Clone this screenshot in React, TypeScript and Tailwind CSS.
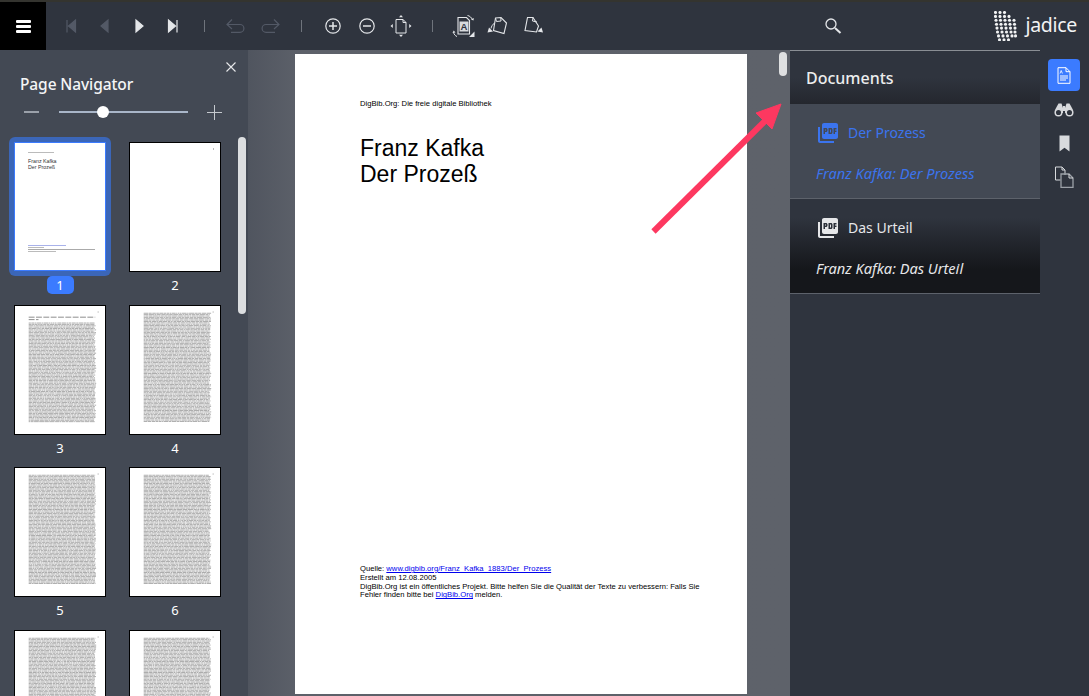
import React from 'react';
import { MdPictureAsPdf } from 'react-icons/md';

function Sep() {
  return (
    <div className="w-[28px] flex justify-center">
      <div className="w-px h-[12px] bg-[#6f747c]" />
    </div>
  );
}

function ToolIcon({ children, className = 'text-[#e4e6e9]' }: { children: React.ReactNode; className?: string }) {
  return (
    <div className={`w-[34px] h-[34px] flex items-center justify-center ${className}`}>
      <svg width="24" height="24" viewBox="0 0 24 24" fill="none" stroke="currentColor" strokeWidth="1.2">
        {children}
      </svg>
    </div>
  );
}

function JadiceLogo() {
  const rows = [
    [1.5, 6, 10.5],
    [1.5, 6, 10.5, 15],
    [2, 6.5, 11, 15.5, 20],
    [2.5, 7, 11.5, 16, 20.5],
    [3, 7.5, 12, 16.5, 21],
    [3.5, 8, 12.5, 17, 21],
    [4.5, 9, 13.5, 18, 21.5],
    [5.5, 10, 14.5],
  ];
  return (
    <div className="flex items-center gap-[8px]">
      <svg width="23" height="30" viewBox="0 0 23 30">
        {rows.map((r, y) =>
          r.map((x) => <circle key={`${x}-${y}`} cx={x} cy={1.5 + y * 3.9} r={1.55} fill="#f2f3f4" />)
        )}
      </svg>
      <span className="text-[19.500px] leading-none tracking-[-0.3px] text-[#f2f3f4] mt-[-3px]">jadice</span>
    </div>
  );
}

function Toolbar() {
  return (
    <div className="h-[50px] shrink-0 flex items-center bg-[#2f343e] border-t-2 border-[#34342f]">
      <div className="w-[46px] h-full bg-black flex flex-col items-center justify-center gap-[2px]">
        <div className="w-[15px] h-[3px] rounded-[1px] bg-white" />
        <div className="w-[15px] h-[3px] rounded-[1px] bg-white" />
        <div className="w-[15px] h-[3px] rounded-[1px] bg-white" />
      </div>
      <div className="w-[8px]" />
      <ToolIcon className="text-[#535966]">
        <path d="M8 6v12.500M16.500 6v12l-7-6z" fill="currentColor" />
      </ToolIcon>
      <ToolIcon className="text-[#535966]">
        <path d="M15 6v12l-7-6z" fill="currentColor" />
      </ToolIcon>
      <ToolIcon>
        <path d="M9 6v12l7-6z" fill="currentColor" />
      </ToolIcon>
      <ToolIcon>
        <path d="M7.500 6v12l7-6zM16 6v12.500" fill="currentColor" />
      </ToolIcon>
      <Sep />
      <div className="w-px" />
      <ToolIcon className="text-[#535966]">
        <path d="M8 5.500 3 10.500 8 15M3.500 10.500h12.500a3.800 3.800 0 0 1 0 7.800H7" />
      </ToolIcon>
      <ToolIcon className="text-[#535966]">
        <path d="M16 5.500l5 5-5 4.500M20.500 10.500H8a3.800 3.800 0 0 0 0 7.800h9" />
      </ToolIcon>
      <Sep />
      <div className="w-px" />
      <ToolIcon>
        <circle cx="12" cy="12" r="7.200" />
        <path d="M8 12h8M12 8v8" strokeWidth="1.500" />
      </ToolIcon>
      <ToolIcon>
        <circle cx="12" cy="12" r="7.200" />
        <path d="M8 12h8" strokeWidth="1.500" />
      </ToolIcon>
      <ToolIcon>
        <path d="M7 5.500h7l3 3v10.500H7z" strokeWidth="1" />
        <path d="M14 5.500v3h3" strokeWidth="1" />
        <path d="M12 1l2 2.300h-4zM12 23l2-2.300h-4zM1.500 12l2.300-2v4zM22.500 12l-2.300-2v4z" fill="currentColor" stroke="none" />
      </ToolIcon>
      <Sep />
      <div className="w-px" />
      <ToolIcon>
        <path d="M6 3.500h8.500l3 3v13.500H6z" strokeWidth="1.100" />
        <rect x="7.500" y="7.500" width="9" height="10" fill="#d8dadd" stroke="none" />
        <text x="12" y="16" textAnchor="middle" fontSize="9.500" fontWeight="700" fill="#2f3540" stroke="none" fontFamily="'Liberation Sans', sans-serif">A</text>
        <path d="M15.500 1.500c2.200.4 4 2 4.800 4M1.500 18.500c.5 1.800 1.800 3.400 3.500 4" strokeWidth="1" />
        <path d="M22.500 23h-5.500l5.500-5.500zM21.500 6.500l-2.500-1 2.800-1.500zM.5 19l3-.5-1.800-2z" fill="currentColor" stroke="none" />
      </ToolIcon>
      <ToolIcon>
        <path d="M9.500 4l5.500-.5 5.500 5.500-2.500 10.500-10.500-3z" strokeWidth="1.100" />
        <path d="M9.500 4l1 3.500 4.500-.5-.2-3.500" strokeWidth="1" />
        <path d="M1.500 18.500l1.500-5 4 4z" fill="currentColor" stroke="none" />
        <path d="M5 14.500c.3-2 1.500-4 3.500-5.500" strokeWidth="1" />
      </ToolIcon>
      <ToolIcon>
        <path d="M8.500 3.500h5.500l5.500 8.500-2 6-11.500-1.500z" transform="translate(-1 0)" strokeWidth="1.100" />
        <path d="M13 3.500l-.5 3.500 4.500 1" strokeWidth="1" />
        <path d="M23 18.500l-1.500-5-4 4z" fill="currentColor" stroke="none" />
      </ToolIcon>
      <div className="ml-[267px]">
        <ToolIcon>
          <circle cx="10" cy="10" r="5" strokeWidth="1.300" />
          <path d="M14 14l5.500 5" strokeWidth="2" />
        </ToolIcon>
      </div>
      <div className="ml-auto mr-[12px]">
        <JadiceLogo />
      </div>
    </div>
  );
}

// fake body text of a shrunken page
function TextLines({ seed, top }: { seed: number; top: number }) {
  const lines: React.ReactNode[] = [];
  let s = seed;
  const next = () => {
    s = (s * 9301 + 49297) % 233280;
    return s / 233280;
  };
  for (let y = top; y < 119; y += 1.4) {
    let x = 14;
    const end = 83 - next() * 2;
    const parts: string[] = [];
    while (x < end) {
      const w = 1 + next() * 4.5;
      parts.push(`M${x.toFixed(1)} ${y.toFixed(1)}h${Math.min(w, end - x).toFixed(1)}`);
      x += w + 0.5;
    }
    lines.push(<path key={y} d={parts.join('')} stroke="#a2a2a2" strokeWidth="0.9" />);
  }
  return <>{lines}</>;
}

function TextThumb({ seed, heading }: { seed: number; heading?: boolean }) {
  return (
    <svg width="92" height="130" viewBox="0 0 92 130" className="block shrink-0 bg-white border border-black">
      {heading && <path d="M14 11h68M14 13.500h10" stroke="#8a8a8a" strokeWidth="1" strokeDasharray="6 1.500" />}
      <TextLines seed={seed} top={heading ? 17 : 7} />
      <path d="M85 5v1.500" stroke="#aaa" strokeWidth="0.8" />
    </svg>
  );
}

function PageNavigator() {
  const pages = [3, 4, 5, 6, 7, 8];
  return (
    <div className="relative w-[248px] shrink-0 bg-[#434954] overflow-hidden">
      <button className="absolute top-[11px] right-[11px] w-[12px] h-[12px] text-[#e8e9eb]">
        <svg width="12" height="12" viewBox="0 0 12 12" stroke="currentColor" strokeWidth="1.100">
          <path d="M1.500 1.500l9 9M10.500 1.500l-9 9" />
        </svg>
      </button>
      <div className="pl-[20px] pt-[22px] text-[15.500px] tracking-[-0.1px] leading-[24px] font-medium text-[#f4f5f6]">Page Navigator</div>
      <div className="flex items-center h-[20px] mt-[6px] pl-[24px]">
        <div className="w-[15px] h-[2px] bg-[#9ba1aa]" />
        <div className="relative ml-[20px] w-[129px] h-[2px] bg-[#a9b6c9]">
          <div className="absolute left-[38px] top-[-5px] w-[12px] h-[12px] rounded-full bg-white" />
        </div>
        <div className="relative ml-[19px] w-[15px] h-[15px]">
          <div className="absolute top-[7px] left-0 w-[15px] h-px bg-[#c5c9ce]" />
          <div className="absolute left-[7px] top-0 h-[15px] w-px bg-[#c5c9ce]" />
        </div>
      </div>
      <div className="grid grid-cols-[92px_92px] gap-x-[23px] pl-[14px] pt-[20px]">
        <div className="h-[162.500px] flex flex-col items-center">
          <div className="w-[102px] h-[139px] mt-[-5px] shrink-0 rounded-[6px] bg-[#3b66b8] p-[5px]">
            <div className="h-[129px] bg-white border border-[#3b7bff] pl-[13px] pt-[9px] text-black" style={{ fontFamily: "'Liberation Sans', sans-serif" }}>
              <div className="h-px w-[26px] bg-[#bbb]" />
              <div className="mt-[6px] text-[5.300px] leading-[5.700px] text-[#333]">
                Franz Kafka
                <br />
                Der Prozeß
              </div>
              <div className="mt-[75px] h-px w-[38px] bg-[#a9b2ea]" />
              <div className="mt-px h-px w-[16px] bg-[#bbb]" />
              <div className="mt-px h-px w-[67px] bg-[#aaa]" />
              <div className="mt-px h-px w-[28px] bg-[#bbb]" />
            </div>
          </div>
          <div className="w-[27px] h-[18px] rounded-[5px] bg-[#3b7bff] text-white text-[13px] leading-[18px] text-center">1</div>
        </div>
        <div className="h-[162.500px] flex flex-col items-center">
          <div className="w-[92px] h-[130px] shrink-0 bg-white border border-black flex justify-end pt-[5px] pr-[6px]">
            <div className="w-px h-[2px] bg-[#bbb]" />
          </div>
          <div className="mt-[4px] text-white text-[13px] leading-[18px] text-center">2</div>
        </div>
        {pages.map((p) => (
          <div key={p} className="h-[162.500px] flex flex-col items-center">
            <TextThumb seed={p * 137} heading={p === 3} />
            {p < 7 && <div className="mt-[4px] text-white text-[13px] leading-[18px] text-center">{p}</div>}
          </div>
        ))}
      </div>
      <div className="absolute left-[238px] top-[87px] w-[8px] h-[177px] rounded-full bg-[#dcdee0]" />
    </div>
  );
}

function PdfPage() {
  return (
    <div className="relative w-[542px] shrink-0 bg-gradient-to-r from-[#50555f] via-[#5d616a] via-10% to-[#5e626a] flex pl-[47px] pt-[4px]">
      <div className="w-[452px] h-[640px] bg-white pl-[65px] pt-[45px] text-black" style={{ fontFamily: "'Liberation Sans', sans-serif" }}>
        <div className="text-[7.650px] leading-[9px]">DigBib.Org: Die freie digitale Bibliothek</div>
        <div className="mt-[27px] text-[23px] leading-[26px]">
          Franz Kafka
          <br />
          Der Prozeß
        </div>
        <div className="mt-[378px] text-[7.650px] leading-[8.800px] whitespace-nowrap">
          <div>
            Quelle: <span className="text-[#0000ee] underline">www.digbib.org/Franz_Kafka_1883/Der_Prozess</span>
          </div>
          <div>Erstellt am 12.08.2005</div>
          <div>DigBib.Org ist ein öffentliches Projekt. Bitte helfen Sie die Qualität der Texte zu verbessern: Falls Sie</div>
          <div>
            Fehler finden bitte bei <span className="text-[#0000ee] underline">DigBib.Org</span> melden.
          </div>
        </div>
      </div>
      <div className="absolute top-[2px] right-[3px] w-[8px] h-[24px] rounded-full bg-[#dfe0e1]" />
    </div>
  );
}

function DocumentsPanel() {
  return (
    <div className="w-[250px] shrink-0 bg-[#2f343e]">
      <div className="h-[54px] border-t border-[#8a8e94] bg-gradient-to-b from-[#2f343e] from-50% to-[#24272e] pl-[16px] flex items-center text-[16px] font-medium text-[#eceded]">
        Documents
      </div>
      <div className="h-[95px] bg-[#434954] border-b border-[#5d626b] pl-[26px] text-[#3b74ee]">
        <div className="flex items-center gap-[8px] pt-[17px]">
          <MdPictureAsPdf size={24} />
          <span className="text-[14px] leading-[24px]">Der Prozess</span>
        </div>
        <div className="mt-[18px] text-[14.600px] leading-[20px] italic">Franz Kafka: Der Prozess</div>
      </div>
      <div className="h-[95px] bg-gradient-to-b from-[#2f343e] from-20% to-[#15171b] to-75% border-b border-[#5d626b] pl-[26px] text-[#e6e7e9]">
        <div className="flex items-center gap-[8px] pt-[17px]">
          <MdPictureAsPdf size={24} />
          <span className="text-[14px] leading-[24px]">Das Urteil</span>
        </div>
        <div className="mt-[18px] text-[14.600px] leading-[20px] italic">Franz Kafka: Das Urteil</div>
      </div>
    </div>
  );
}

function SideRail() {
  return (
    <div className="w-[49px] shrink-0 bg-[#2f343e] flex flex-col items-center pt-[9px] pr-[1px] text-[#d8dadd]">
      <div className="w-[32px] h-[32px] rounded-[4px] bg-[#3b7bff] flex items-center justify-center">
        <svg width="14" height="17" viewBox="0 0 14 17" fill="none" stroke="#fff" strokeWidth="1">
          <path d="M1 .7h8l4 4v11.600H1z" fill="#3b7bff" />
          <path d="M9 .7v4h4" />
          <path d="M3 9h8M3 11h8M3 13h6" strokeWidth="1.200" />
          <path d="M3 6.500 4.200 3.500 5.400 6.500" strokeWidth="0.800" />
        </svg>
      </div>
      <div className="h-[36px] flex items-center justify-center">
        <svg width="20" height="15" viewBox="0 0 20 15" fill="currentColor">
          <path d="M4.500 1.500h3L9 6v5H1l.5-4z" />
          <path d="M15.500 1.500h-3L11 6v5h8l-.5-4z" />
          <circle cx="4.500" cy="10.500" r="3.300" fill="#2f343e" stroke="currentColor" strokeWidth="1.500" />
          <circle cx="15.500" cy="10.500" r="3.300" fill="#2f343e" stroke="currentColor" strokeWidth="1.500" />
          <rect x="9" y="4" width="2" height="5" />
        </svg>
      </div>
      <div className="h-[32px] flex items-center justify-center">
        <svg width="11" height="17" viewBox="0 0 11 17" fill="currentColor">
          <path d="M0.500 0.500h10v16l-5-3.800-5 3.800z" />
        </svg>
      </div>
      <div className="h-[36px] flex items-center justify-center">
        <svg width="20" height="22" viewBox="0 0 20 22" fill="none" stroke="currentColor" strokeWidth="1">
          <path d="M1.500 1h6.500l3 3v5M1.500 1v13h5" />
          <path d="M8 1v3h3" />
          <path d="M7 8h8l4 4v9.500H7z" stroke="#9ca1a8" strokeWidth="1.300" />
          <path d="M15 8v4h4" />
        </svg>
      </div>
    </div>
  );
}

export default function App() {
  return (
    <div className="relative w-[1089px] h-[696px] overflow-hidden flex flex-col bg-[#2f343e]" style={{ fontFamily: "'Noto Sans', sans-serif" }}>
      <Toolbar />
      <div className="flex-1 flex min-h-0">
        <PageNavigator />
        <PdfPage />
        <DocumentsPanel />
        <SideRail />
      </div>
      {/* annotation arrow on top of the screenshot */}
      <svg className="absolute left-[640px] top-[90px]" width="160" height="160" viewBox="0 0 160 160">
        <path d="M13.500 141.500 125 31" stroke="#fd3860" strokeWidth="6" />
        <path d="M141 14 116 23 132 39z" fill="#fd3860" stroke="#fd3860" strokeWidth="1" />
      </svg>
    </div>
  );
}
